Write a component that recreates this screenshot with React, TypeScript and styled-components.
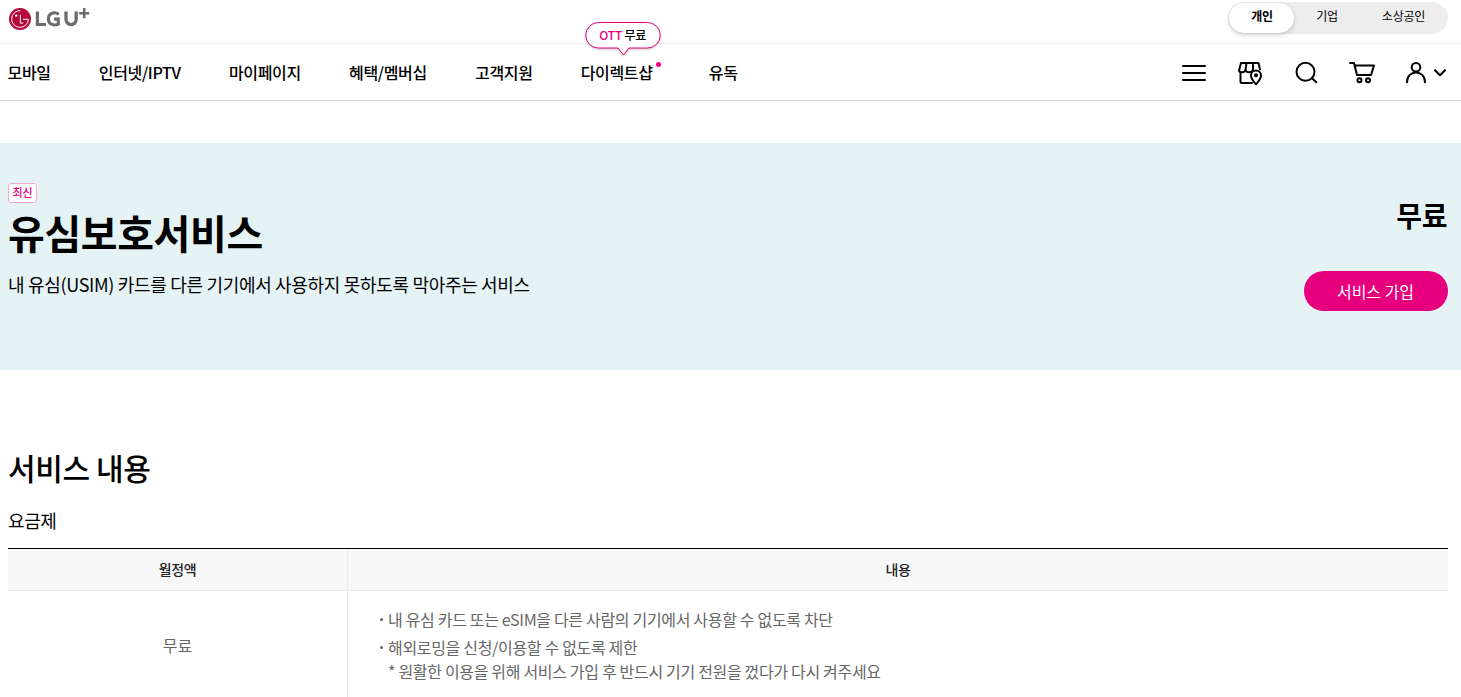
import React from 'react';
import styled, { createGlobalStyle, css } from 'styled-components';

const colors = {
  pink: '#e6007e',
  black: '#000',
  grey: '#666',
  line: '#ebebeb',
  banner: '#e5f3f4',
};

const GlobalStyle = createGlobalStyle`
  * {
    box-sizing: border-box;
  }
  body {
    margin: 0;
    overflow: hidden;
    background: #fff;
    color: ${colors.black};
    font-family: 'Noto Sans CJK KR', 'Noto Sans', sans-serif;
  }
  h1, h2, h3, p, ul {
    margin: 0;
    padding: 0;
    list-style: none;
  }
  button {
    border: 0;
    padding: 0;
    background: none;
    font-family: inherit;
    color: inherit;
  }
  svg {
    display: block;
  }
`;

const Page = styled.div`
  height: 697px;
  overflow: hidden;
`;

const TopBar = styled.div`
  display: flex;
  justify-content: space-between;
  height: 44px;
  padding: 2px 13px 0 8px;
  border-bottom: 1px solid ${colors.line};
`;

const Segments = styled.div`
  display: flex;
  height: 32px;
  padding: 1px;
  border-radius: 16px;
  background: #ededed;
`;

const Segment = styled.button<{ $width: number; $active?: boolean }>`
  width: ${({ $width }) => $width}px;
  height: 30px;
  padding: 0 0 5px 1px;
  border-radius: 15px;
  font-size: 12px;
  letter-spacing: -0.2px;
  line-height: 25px;
  ${({ $active }) =>
    $active &&
    css`
      background: #fff;
      font-weight: 700;
      box-shadow: 0 2px 5px rgba(0, 0, 0, 0.18);
    `}
`;

const NavBar = styled.div`
  display: flex;
  justify-content: space-between;
  align-items: center;
  height: 57px;
  padding: 0 13px 0 7.5px;
  border-bottom: 1px solid #d9d9d9;
`;

const Menu = styled.nav`
  display: flex;
  gap: 48.2px;
`;

const MenuItem = styled.a`
  position: relative;
  font-size: 16px;
  font-weight: 500;
  letter-spacing: -0.34px;
  line-height: 24px;
  white-space: nowrap;

  &:last-child {
    margin-left: 8px;
  }
`;

const NewDot = styled.i`
  position: absolute;
  top: 2px;
  right: -8.5px;
  width: 5px;
  height: 5px;
  border-radius: 50%;
  background: #f0047f;
`;

const Bubble = styled.span`
  position: absolute;
  top: -38px;
  left: 4px;
  width: 76px;
  height: 34px;
  font-size: 12px;
  letter-spacing: -0.2px;
  line-height: 26px;
  text-align: center;

  svg {
    position: absolute;
    top: 0;
    left: 0;
    overflow: visible;
    filter: drop-shadow(0 1px 1px rgba(0, 0, 0, 0.25));
  }
  b {
    position: relative;
    font-weight: 500;
  }
  em {
    color: ${colors.pink};
    font-style: normal;
  }
`;

const Tools = styled.div`
  display: flex;
  align-items: center;
  gap: 28px;
`;

const Icon = styled.svg`
  fill: none;
  stroke: #000;
  stroke-width: 2;
  stroke-linecap: round;
  stroke-linejoin: round;
`;

const Banner = styled.section`
  display: flex;
  justify-content: space-between;
  height: 227px;
  margin-top: 42px;
  padding: 40px 13px 0 8px;
  background: ${colors.banner};
`;

const Badge = styled.span`
  display: block;
  width: 29px;
  height: 20px;
  border: 1px solid #f7a8d2;
  border-radius: 3px;
  background: #fff;
  color: ${colors.pink};
  font-size: 11px;
  font-weight: 500;
  line-height: 17px;
  text-align: center;
`;

const Title = styled.h1`
  font-size: 40px;
  font-weight: 700;
  letter-spacing: -0.4px;
  line-height: 58px;
`;

const Summary = styled.p`
  margin-top: 10px;
  font-size: 18px;
  letter-spacing: -0.32px;
  line-height: 27px;
`;

const PriceColumn = styled.div`
  display: flex;
  flex-direction: column;
  align-items: flex-end;
  padding-top: 11px;
`;

const Price = styled.strong`
  padding-right: 1px;
  font-size: 28px;
  font-weight: 700;
  letter-spacing: -0.4px;
  line-height: 42px;
`;

const JoinButton = styled.button`
  width: 144px;
  height: 40px;
  margin-top: 35px;
  padding-right: 1px;
  border-radius: 20px;
  background: ${colors.pink};
  color: #fff;
  font-size: 16px;
  line-height: 40px;
`;

const Content = styled.main`
  padding: 75px 13px 0 8px;
`;

const SectionTitle = styled.h2`
  font-size: 30px;
  font-weight: 500;
  letter-spacing: -0.4px;
  line-height: 44px;
`;

const TableTitle = styled.h3`
  margin-top: 18px;
  font-size: 18px;
  font-weight: 400;
  letter-spacing: -0.4px;
  line-height: 26px;
`;

const Table = styled.div`
  display: grid;
  grid-template-columns: 340px 1fr;
  grid-template-rows: 42px 110px;
  margin-top: 15px;
  border-top: 1px solid #000;
`;

const HeadCell = styled.div`
  border-bottom: 1px solid ${colors.line};
  background: #f8f8f8;
  color: #222;
  font-size: 14px;
  font-weight: 500;
  letter-spacing: -0.4px;
  line-height: 40px;
  text-align: center;

  &:first-child {
    border-right: 1px solid ${colors.line};
  }
`;

const FeeCell = styled.div`
  border-right: 1px solid ${colors.line};
  color: ${colors.grey};
  font-size: 16px;
  line-height: 109px;
  text-align: center;
`;

const DetailList = styled.ul`
  display: flex;
  flex-direction: column;
  gap: 4px;
  padding: 16px 30px 0;
  color: ${colors.grey};
  font-size: 16px;
  letter-spacing: -0.32px;
  line-height: 24px;
`;

const DetailItem = styled.li`
  display: flex;

  &::before {
    content: '';
    flex: none;
    width: 3px;
    height: 3px;
    margin: 11px 5px 0 2px;
    border-radius: 50%;
    background: ${colors.grey};
  }
`;

const Logo = () => (
  <svg width="84" height="32" viewBox="8 2 84 32" role="img">
    <circle cx="20" cy="19" r="11" fill="#b5063a" />
    <g fill="none" stroke="#fff" strokeWidth="1">
      <path d="M20.5 10.6A8.4 8.4 0 1 0 28.4 19.3H22.8" />
      <path d="M20.3 14.8v8.3h3" />
    </g>
    <circle cx="16.2" cy="15.6" r="1.2" fill="#fff" />
    <g fill="none" stroke="#6b6c6e">
      <path strokeWidth="3.2" d="M37.4 11.5v13H46" />
      <path strokeWidth="3.1" d="M58.8 14.3c-4-3-10.4-1.2-10.4 4.6 0 5.8 6 7.2 9.9 5.2v-5h-4.3" />
      <path strokeWidth="3.3" d="M66 11.5v7.6c0 7.3 10.2 7.3 10.2 0v-7.6" />
      <path strokeWidth="2.5" d="M84.2 8v10.2M79.2 13.2h10" />
    </g>
  </svg>
);

const menuItems = [
  '모바일',
  '인터넷/IPTV',
  '마이페이지',
  '혜택/멤버십',
  '고객지원',
  '다이렉트샵',
  '유독',
];

const App: React.FC = () => (
  <>
    <GlobalStyle />
    <Page>
      <header>
        <TopBar>
          <Logo />
          <Segments>
            <Segment $width={65} $active>
              개인
            </Segment>
            <Segment $width={65}>기업</Segment>
            <Segment $width={88}>소상공인</Segment>
          </Segments>
        </TopBar>
        <NavBar>
          <Menu>
            {menuItems.map((item) => (
              <MenuItem key={item}>
                {item}
                {item === '다이렉트샵' && (
                  <>
                    <NewDot />
                    <Bubble>
                      <svg width="76" height="34" viewBox="0 0 76 34">
                        <path
                          fill="#fff"
                          stroke={colors.pink}
                          d="M13.5.5h49a12.5 12.5 0 0 1 0 25.5H44l-5.5 7-5.5-7H13.5a12.5 12.5 0 0 1 0-25.5z"
                        />
                      </svg>
                      <b>
                        <em>OTT</em> 무료
                      </b>
                    </Bubble>
                  </>
                )}
              </MenuItem>
            ))}
          </Menu>
          <Tools>
            <Icon width="28" height="28" viewBox="1180 58 28 28">
              <path d="M1183 66h22M1183 73h22M1183 80h22" />
            </Icon>
            <Icon width="28" height="28" viewBox="1236 58 28 28">
              <path d="M1241 63h17.5l1.5 6.5M1241 63l-2 7.5c.5 2.5 5.5 2.5 6.5-.5 1 3 6.5 3 7.5-.5" />
              <path d="M1246.5 63l-1 7M1253 63v7" />
              <path d="M1240.5 73v8.5q0 1.5 1.5 1.5h10" />
              <path
                fill="#fff"
                d="M1256 84.3c-3-3.3-5-5.8-5-8.8a5 5 0 0 1 10 0c0 3-2 5.5-5 8.8z"
              />
              <circle cx="1256" cy="75.2" r="1" fill="#000" />
            </Icon>
            <Icon width="28" height="28" viewBox="1292 58 28 28">
              <circle cx="1305.5" cy="71.8" r="9" />
              <path d="M1312 78.3l4.3 4" />
            </Icon>
            <Icon width="28" height="28" viewBox="1348 58 28 28">
              <path d="M1350 63h4l3 12h14l3-9.5h-19.5" />
              <circle cx="1359.5" cy="80.2" r="2" />
              <circle cx="1368" cy="80.2" r="2" />
            </Icon>
            <Icon width="44" height="28" viewBox="1404 58 44 28">
              <circle cx="1416" cy="67.2" r="4.3" />
              <path d="M1407 82.2c0-13 18-13 18 0" />
              <path d="M1435 70.2l5 5 5-5" />
            </Icon>
          </Tools>
        </NavBar>
      </header>
      <Banner>
        <div>
          <Badge>최신</Badge>
          <Title>유심보호서비스</Title>
          <Summary>
            내 유심(USIM) 카드를 다른 기기에서 사용하지 못하도록 막아주는 서비스
          </Summary>
        </div>
        <PriceColumn>
          <Price>무료</Price>
          <JoinButton>서비스 가입</JoinButton>
        </PriceColumn>
      </Banner>
      <Content>
        <SectionTitle>서비스 내용</SectionTitle>
        <TableTitle>요금제</TableTitle>
        <Table>
          <HeadCell>월정액</HeadCell>
          <HeadCell>내용</HeadCell>
          <FeeCell>무료</FeeCell>
          <DetailList>
            <DetailItem>
              내 유심 카드 또는 eSIM을 다른 사람의 기기에서 사용할 수 없도록 차단
            </DetailItem>
            <DetailItem>
              <div>
                해외로밍을 신청/이용할 수 없도록 제한
                <p>* 원활한 이용을 위해 서비스 가입 후 반드시 기기 전원을 껐다가 다시 켜주세요</p>
              </div>
            </DetailItem>
          </DetailList>
        </Table>
      </Content>
    </Page>
  </>
);

export default App;
